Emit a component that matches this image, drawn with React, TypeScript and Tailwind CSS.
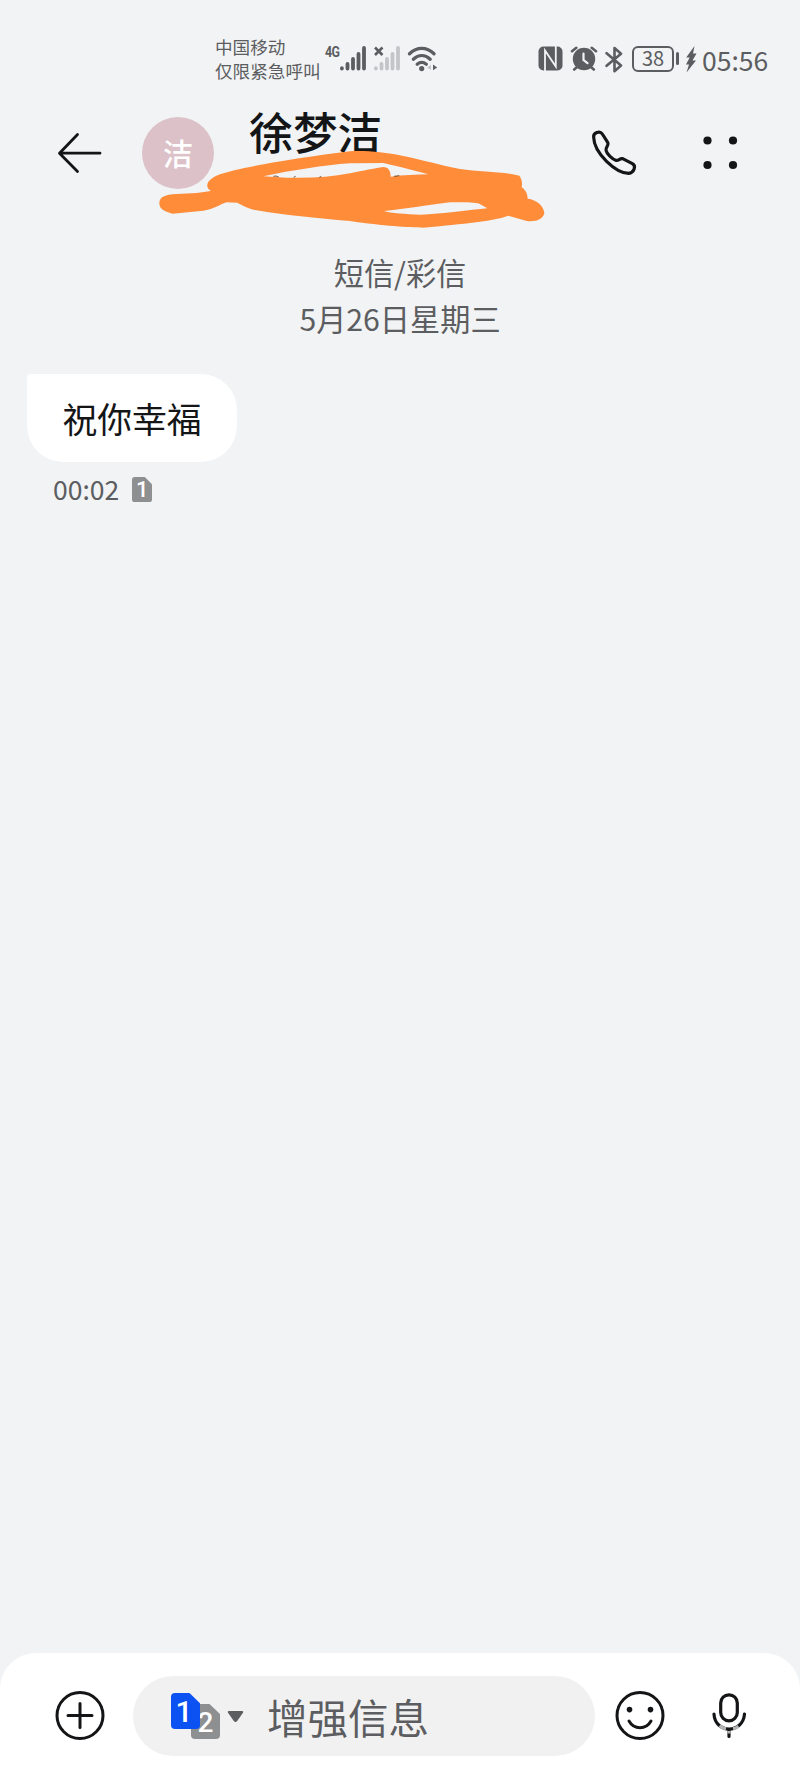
import type { ReactNode } from 'react'

const INK = '#141517'
const GREY = '#5c5d60'

// ── Status bar ──

function SignalBars({ color }: { color: string }) {
  return (
    <svg width="26" height="25" viewBox="0 0 26 25" stroke={color} strokeWidth="3.8" strokeLinecap="round">
      <path d="M1.9 22.2v.4M7.5 18v4.6M13 13v9.6M18.5 8v14.6M24 2v20.6" />
    </svg>
  )
}

function WifiIcon() {
  return (
    <svg width="32" height="26" viewBox="0 0 32 26" fill="none" stroke={GREY} strokeWidth="3.3" strokeLinecap="round">
      <path d="M2.5 7.8C10 .6 19.5 .6 27 7.8M6.3 13.2c5.2-4.7 11.7-4.7 16.9 0M10.2 18.2c2.8-2.3 6.3-2.3 9.1 0" />
      <circle cx="14.7" cy="22.6" r="2.6" fill={GREY} stroke="none" />
      <path d="M24 19v5l-4-2.5z" fill="#c4c5c8" stroke="none" />
      <path d="M26 18.5v5.8l4.2-2.9z" fill={GREY} stroke="none" />
    </svg>
  )
}

function NfcIcon() {
  return (
    <svg width="25" height="25" viewBox="0 0 25 25">
      <rect x=".5" y=".5" width="24" height="24" rx="5" fill={GREY} />
      <path d="M7 25V4.5L17.8 20.500V0" fill="none" stroke="#f1f3f5" strokeWidth="1.8" />
    </svg>
  )
}

function AlarmIcon() {
  return (
    <svg width="28" height="25" viewBox="0 0 28 25" fill="none" strokeLinecap="round">
      <circle cx="14" cy="13" r="11.2" fill={GREY} />
      <path d="M2 5.2 6.3 1.8M26 5.2 21.7 1.8M6.5 21.5l-2.3 2M21.5 21.5l2.3 2" stroke={GREY} strokeWidth="2.6" />
      <path d="M13.5 7.5V14l4 3.2" stroke="#f1f3f5" strokeWidth="2.2" />
    </svg>
  )
}

function BluetoothIcon() {
  return (
    <svg width="18" height="27" viewBox="0 0 18 27" fill="none" stroke={GREY} strokeWidth="2.6" strokeLinejoin="round" strokeLinecap="round">
      <path d="M1.6 7.2 16 19.5l-6.5 5.7V2L16 7.7 1.6 19.8" />
    </svg>
  )
}

function StatusBar() {
  return (
    <div className="flex h-[95px] items-start pl-[215px] text-[#5c5d60]">
      <div className="mt-[35px] w-[110px] text-[17.6px] leading-6 whitespace-nowrap">
        <div>中国移动</div>
        <div>仅限紧急呼叫</div>
      </div>
      <div className="mt-[46px] flex items-start">
        <span className="w-[15px] origin-left scale-x-80 font-[Roboto] text-[15.5px] leading-[13px] font-bold tracking-[-0.8px]">4G</span>
        <SignalBars color={GREY} />
        <div className="relative ml-[8px]">
          <SignalBars color="#c4c5c8" />
          <svg className="absolute top-0 left-0" width="10" height="10" viewBox="0 0 10 10" stroke={GREY} strokeWidth="2.6">
            <path d="M1 1.5 8.5 9M8.5 1.5 1 9" />
          </svg>
        </div>
        <div className="ml-[7px]">
          <WifiIcon />
        </div>
      </div>
      <div className="mt-[46px] ml-[99px] flex items-start">
        <NfcIcon />
        <div className="ml-[7px]"><AlarmIcon /></div>
        <div className="ml-[7px]"><BluetoothIcon /></div>
        <div className="ml-[9px] flex h-[26px] w-[42px] items-center justify-center rounded-[6px] border-[2.5px] border-[#5c5d60] text-[20px] leading-none">
          <span className="relative -top-px">38</span>
        </div>
        <div className="mt-[6px] ml-[2px] h-[13px] w-[3px] rounded-sm bg-[#5c5d60]" />
        <svg className="ml-[6px]" width="12" height="27" viewBox="0 0 12 27" fill={GREY}>
          <path d="M9.5 0 1.2 11.5h3.5L1 18.5h3L1.5 26.5l9.500-12H7.500l4-7H8z" />
        </svg>
        <span className="-mt-[1px] ml-[5px] text-[26.5px] leading-[30px]">05:56</span>
      </div>
    </div>
  )
}

// ── Header ──

function Scribble() {
  return (
    <svg className="absolute top-[45px] left-[150px]" width="400" height="95" viewBox="0 0 1200 285" fill="#ff8c39" fillRule="evenodd">
      <path
        d="M28 190C28 170 45 164 80 162L140 159 183 153C162 140 170 118 210 103C260 84 420 57 600 34C640 31 700 35 760 48C820 60 870 76 930 87C990 96 1060 94 1108 107C1115 115 1118 130 1115 142C1128 150 1133 165 1133 176C1160 178 1183 200 1183 220C1178 240 1155 246 1130 243L1075 227C1030 245 900 255 820 263C780 262 700 258 600 243C500 235 400 225 320 211C290 205 275 195 262 188L230 187C205 195 200 205 160 212L68 221C40 215 28 205 28 190Z
        M340 109C430 90 520 76 600 70L700 69C740 78 790 90 835 103C800 105 760 104 722 110C722 92 715 82 700 81C660 88 620 95 600 100C540 112 480 115 410 113Z
        M702 213C760 208 820 197 900 187C940 186 975 188 985 190L1012 205C960 210 880 222 810 224C770 222 720 220 702 213Z"
      />
      <path d="M370 109q8-3 16 2M431 112l6-3M508 112l6-3M732 109l16-2" fill="none" stroke="#5b3b22" strokeWidth="2.5" />
    </svg>
  )
}

function Header() {
  return (
    <div className="relative flex h-[140px] items-start pl-[57px]">
      <svg className="mt-[36px]" width="46" height="44" viewBox="0 0 46 44" fill="none" stroke={INK} strokeWidth="2.8" strokeLinecap="round" strokeLinejoin="round">
        <path d="M20.5 3.5 2.5 22.200l18 18.300M3 22.200h40" />
      </svg>
      <div className="mt-[22px] ml-[39px] flex h-[72px] w-[72px] items-center justify-center rounded-full bg-[#dcc2c8] pb-[2px] text-[30px] leading-none font-medium text-white">
        洁
      </div>
      <h1 className="mt-[14px] ml-[35px] w-[341px] text-[44.3px] leading-[44px] font-medium text-[#141517]">徐梦洁</h1>
      <svg className="mt-[25px] -ml-[10px]" width="70" height="65" viewBox="0 0 210 195" fill="none" stroke={INK} strokeWidth="9.5" strokeLinejoin="round">
        <path d="M41 52C39 38 60 31 67 42L83 67C88 75 76 82 78 91C80 102 98 119 108 121C116 123 119 114 128 116L157 131C170 138 162 158 146 160C108 160 42 100 41 52Z" />
      </svg>
      <svg className="mt-[40px] ml-[52px]" width="36" height="36" viewBox="0 0 36 36" fill={INK}>
        <circle cx="5.5" cy="5.5" r="4.1" />
        <circle cx="31" cy="5.5" r="4.1" />
        <circle cx="5.5" cy="30" r="4.1" />
        <circle cx="31" cy="30" r="4.1" />
      </svg>
      <Scribble />
    </div>
  )
}

// ── Conversation ──

function SimShape({ n, className, children }: { n: number; className: string; children?: ReactNode }) {
  return (
    <span className={`relative inline-flex items-center justify-center font-[Roboto] leading-none ${className}`}>
      <svg className="absolute inset-0 h-full w-full" viewBox="0 0 29 35" preserveAspectRatio="none" fill="currentColor">
        <path d="M4 0h14.5L29 10v21a4 4 0 0 1-4 4H4a4 4 0 0 1-4-4V4a4 4 0 0 1 4-4z" />
      </svg>
      <span className="relative text-white">{n}</span>
      {children}
    </span>
  )
}

function Conversation() {
  return (
    <main className="flex flex-1 flex-col">
      <div className="mt-[14px] text-center text-[30.2px] leading-[46px] text-[#5c5d60]">
        <div>短信/彩信</div>
        <div>5月26日星期三</div>
      </div>
      <div className="mt-[33px] ml-[27px] flex h-[88px] w-[210px] items-center justify-center rounded-[36px] rounded-tl-[4px] bg-white text-[34.8px] leading-none text-[#141517]">
        祝你幸福
      </div>
      <div className="mt-[13px] ml-[53px] flex items-center">
        <span className="text-[26.5px] leading-[28px] text-[#5c5d60]">00:02</span>
        <SimShape n={1} className="ml-[13px] h-[25px] w-[20px] pt-[2px] text-[22px] font-medium text-[#8e8f91]" />
      </div>
    </main>
  )
}

// ── Composer ──

function Composer() {
  return (
    <footer className="flex h-[125px] items-start rounded-t-[36px] bg-white pt-[23px] pl-[55px]">
      <svg className="mt-[14px]" width="50" height="50" viewBox="0 0 50 50" fill="none" stroke={INK} strokeWidth="3" strokeLinecap="round">
        <circle cx="25" cy="25.5" r="23" />
        <path d="M13 25.500h24M25 13.500v24" />
      </svg>
      <div className="ml-[28px] flex h-[80px] w-[462px] items-start rounded-full bg-[#f1f1f2] pl-[38px]">
        <div className="relative mt-[17px] h-[46px] w-[50px]">
          <SimShape n={2} className="mt-[11px] ml-[20px] h-[35px] w-[29px] pt-[2px] text-[28px] font-medium text-[#8e8f91]" />
          <div className="absolute top-0 left-0 flex">
            <SimShape n={1} className="h-[36px] w-[29px] pt-px pr-[3px] text-[30px] font-medium text-[#0c51f2]" />
          </div>
        </div>
        <svg className="mt-[34px] ml-[6px]" width="17" height="14" viewBox="0 0 17 14" fill={GREY}>
          <path d="M2 1h13q2 0 .8 2l-5.600 8q-1.700 2-3.400 0L1.200 3Q0 1 2 1z" />
        </svg>
        <span className="mt-[21px] ml-[23px] text-[40.5px] leading-[40px] text-[#5c5d60]">增强信息</span>
      </div>
      <svg className="mt-[14px] ml-[20px]" width="50" height="50" viewBox="0 0 50 50" fill="none" stroke={INK} strokeWidth="3" strokeLinecap="round">
        <circle cx="25" cy="25.5" r="23" />
        <path d="M14 31c5 9 17 9 22 0" />
        <circle cx="14.5" cy="19.6" r="2.8" fill={INK} stroke="none" />
        <circle cx="35.5" cy="19.6" r="2.8" fill={INK} stroke="none" />
      </svg>
      <svg className="mt-[16px] ml-[46px]" width="36" height="48" viewBox="0 0 36 48" fill="none" stroke={INK} strokeWidth="3.2" strokeLinecap="round">
        <rect x="9.7" y="2.8" width="16.6" height="26" rx="8.3" />
        <path d="M3 22c1 20 29 20 30.5 0M18 37v7.5" />
        <path d="M8.5 33.700q3 2.500 6.500 3.200M22 36.900q3-.8 5.500-2.700M18 39v2.500" stroke="#b4b4b4" strokeLinecap="butt" />
      </svg>
    </footer>
  )
}

export default function App() {
  return (
    <div className="flex h-[1778px] w-[800px] flex-col overflow-hidden bg-[#f1f3f5] font-['Noto_Sans_CJK_SC',sans-serif]">
      <StatusBar />
      <Header />
      <Conversation />
      <Composer />
    </div>
  )
}
